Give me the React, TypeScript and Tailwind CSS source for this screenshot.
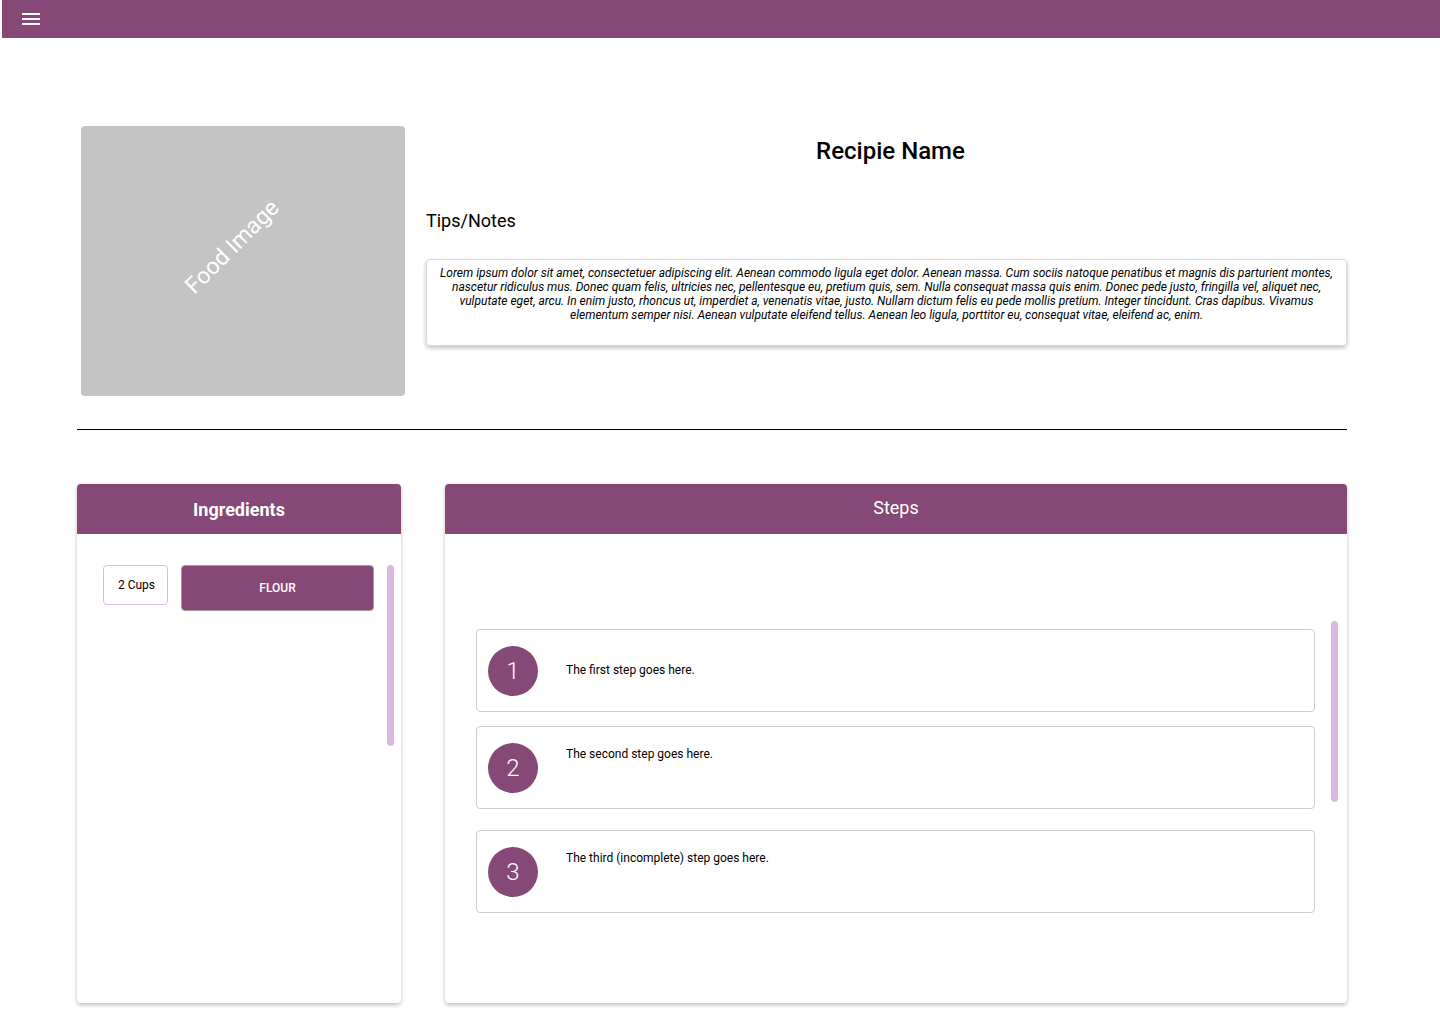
const LOREM =
  'Lorem ipsum dolor sit amet, consectetuer adipiscing elit. Aenean commodo ligula eget dolor. Aenean massa. Cum sociis natoque penatibus et magnis dis parturient montes, nascetur ridiculus mus. Donec quam felis, ultricies nec, pellentesque eu, pretium quis, sem. Nulla consequat massa quis enim. Donec pede justo, fringilla vel, aliquet nec, vulputate eget, arcu. In enim justo, rhoncus ut, imperdiet a, venenatis vitae, justo. Nullam dictum felis eu pede mollis pretium. Integer tincidunt. Cras dapibus. Vivamus elementum semper nisi. Aenean vulputate eleifend tellus. Aenean leo ligula, porttitor eu, consequat vitae, eleifend ac, enim.';

const steps = [
  { n: 1, text: 'The first step goes here.', mt: 'mt-[31px]', gapAfter: 'mb-[14px]' },
  { n: 2, text: 'The second step goes here.', mt: 'mt-[18px]', gapAfter: 'mb-[21px]' },
  { n: 3, text: 'The third (incomplete) step goes here.', mt: 'mt-[18px]', gapAfter: '' },
];

function StepItem({ n, text, mt }: { n: number; text: string; mt: string }) {
  return (
    <div className="h-[83px] border border-[#cccccc] rounded flex items-center pl-[11px] bg-white">
      <div className="w-[50px] h-[50px] rounded-full bg-[#864876] flex items-center justify-center text-white text-[24px] font-light shrink-0">
        {n}
      </div>
      <p className={`self-start ${mt} ml-[28px] text-[12px] text-black`}>{text}</p>
    </div>
  );
}

export default function App() {
  return (
    <div className="w-[1440px] h-[1024px] bg-white relative overflow-hidden font-['Roboto',sans-serif]">
      {/* App bar */}
      <div className="ml-[2px] h-[38px] bg-[#864876] flex items-center pl-[20px]">
        <div className="flex flex-col gap-[3px]">
          <span className="block w-[18px] h-[2px] bg-white" />
          <span className="block w-[18px] h-[2px] bg-white" />
          <span className="block w-[18px] h-[2px] bg-white" />
        </div>
      </div>

      {/* Top section */}
      <div className="flex mt-[88px] ml-[81px]">
        <div className="w-[324px] h-[270px] bg-[#c4c4c4] rounded-[4px] relative shrink-0">
          <span className="absolute left-[91px] top-[104px] text-white text-[23px] -rotate-45 origin-center whitespace-nowrap">
            Food Image
          </span>
        </div>
        <div className="ml-[21px] w-[921px]">
          <h1 className="text-center text-[24px] font-medium text-black mt-[10px] leading-[30px] pl-[8px]">
            Recipie Name
          </h1>
          <h2 className="text-[18px] text-black mt-[44px] leading-[22px]">Tips/Notes</h2>
          <div className="mt-[27px] h-[87px] border border-[#d8d8d8] rounded-[4px] shadow-[0_2px_4px_rgba(0,0,0,0.25)] px-[6px] pt-[6px]">
            <p className="text-[12px] italic text-center leading-[14px] text-black">{LOREM}</p>
          </div>
        </div>
      </div>

      <hr className="mt-[33px] ml-[77px] w-[1270px] border-0 border-t border-black" />

      {/* Bottom section */}
      <div className="flex mt-[54px] ml-[77px] gap-[44px]">
        {/* Ingredients */}
        <div className="w-[324px] h-[519px] bg-white rounded-[4px] shadow-[0_2px_4px_rgba(0,0,0,0.25)] flex flex-col">
          <div className="h-[50px] bg-[#864876] rounded-t-[4px] flex items-center justify-center">
            <span className="text-white text-[18px] font-bold">Ingredients</span>
          </div>
          <div className="flex mt-[31px] ml-[26px]">
            <div className="w-[65px] h-[40px] border border-[#e2b6ea] rounded-[4px] flex items-center justify-center text-[12px] text-black pl-[2px]">
              2 Cups
            </div>
            <button className="ml-[13px] w-[193px] h-[46px] bg-[#864876] border border-[#a0a0a0] rounded-[4px] text-white text-[12px] font-medium uppercase">
              Flour
            </button>
            <div className="ml-[13px] w-[7px] h-[181px] rounded-full bg-[#dbb8e1]" />
          </div>
        </div>

        {/* Steps */}
        <div className="w-[902px] h-[519px] bg-white rounded-[4px] shadow-[0_2px_4px_rgba(0,0,0,0.25)] flex flex-col">
          <div className="h-[50px] bg-[#864876] rounded-t-[4px] flex items-center justify-center pb-[4px]">
            <span className="text-white text-[18px]">Steps</span>
          </div>
          <div className="flex">
            <div className="ml-[31px] w-[839px] mt-[95px]">
              {steps.map((s) => (
                <div key={s.n} className={s.gapAfter}>
                  <StepItem n={s.n} text={s.text} mt={s.mt} />
                </div>
              ))}
            </div>
            <div className="ml-[16px] mt-[87px] w-[7px] h-[181px] rounded-full bg-[#dbb8e1]" />
          </div>
        </div>
      </div>
    </div>
  );
}
